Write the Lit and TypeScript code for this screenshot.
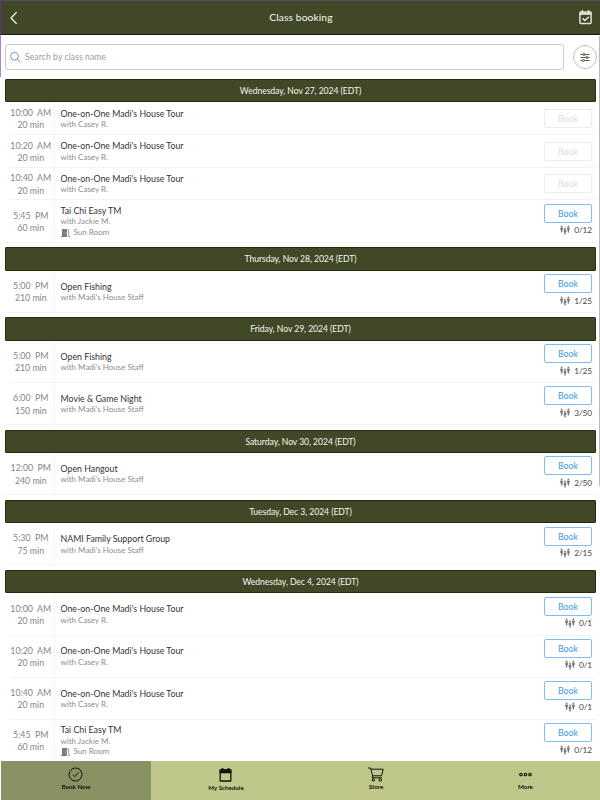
import { LitElement, html, css, svg } from "lit";
import { customElement, property } from "lit/decorators.js";
import { classMap } from "lit/directives/class-map.js";

interface Session {
  time: string;
  length: string;
  name: string;
  host: string;
  room?: string;
  count?: string;
}
interface Day {
  label: string;
  sessions: Session[];
}

const tour = (time: string, count?: string): Session => ({
  time, length: "20 min", name: "One-on-One Madi's House Tour", host: "with Casey R.", count,
});
const taiChi: Session = {
  time: "5:45  PM", length: "60 min", name: "Tai Chi Easy TM", host: "with Jackie M.", room: "Sun Room", count: "0/12",
};
const staff = (time: string, length: string, name: string, count: string): Session => ({
  time, length, name, host: "with Madi's House Staff", count,
});

const days: Day[] = [
  { label: "Wednesday, Nov 27, 2024 (EDT)", sessions: [tour("10:00  AM"), tour("10:20  AM"), tour("10:40  AM"), taiChi] },
  { label: "Thursday, Nov 28, 2024 (EDT)", sessions: [staff("5:00  PM", "210 min", "Open Fishing", "1/25")] },
  { label: "Friday, Nov 29, 2024 (EDT)", sessions: [staff("5:00  PM", "210 min", "Open Fishing", "1/25"), staff("6:00  PM", "150 min", "Movie & Game Night", "3/50")] },
  { label: "Saturday, Nov 30, 2024 (EDT)", sessions: [staff("12:00  PM", "240 min", "Open Hangout", "2/50")] },
  { label: "Tuesday, Dec 3, 2024 (EDT)", sessions: [staff("5:30  PM", "75 min", "NAMI Family Support Group", "2/15")] },
  { label: "Wednesday, Dec 4, 2024 (EDT)", sessions: [tour("10:00  AM", "0/1"), tour("10:20  AM", "0/1"), tour("10:40  AM", "0/1"), taiChi] },
];

const person = (x: number, y: number) => svg`<circle cx=${x} cy=${y} r="0.9"/><path d="M${x - 1.3} ${y + 1.3}h2.6v2.4h-.6v2.4h-1.4v-2.4h-.6z"/>`;

@customElement("session-row")
export class SessionRow extends LitElement {
  @property({ attribute: false }) session!: Session;

  static styles = css`
    :host { display: block; }
    .row { display: flex; box-sizing: border-box; height: 42.1px; }
    .row.short { height: 32.7px; }
    .when {
      box-sizing: border-box; width: 49.5px; padding: 1.2px 0 0 3px; border-right: 1px solid #f3f6f6;
      display: flex; flex-direction: column; justify-content: center; align-items: center;
      font-size: 8.8px; line-height: 12.4px; color: #858585; white-space: pre; letter-spacing: -0.02px;
    }
    .what { flex: 1; padding-left: 6px; display: flex; flex-direction: column; justify-content: center; }
    .name { font-size: 8.8px; line-height: 11.4px; color: #333; letter-spacing: 0; }
    .host, .room { font-size: 8px; line-height: 10.8px; color: #8d8d8d; }
    .room { display: flex; align-items: center; gap: 4px; }
    .act { width: 48px; padding-right: 5px; display: flex; flex-direction: column; align-items: flex-end; padding-top: 3.4px; }
    .short .act { padding-top: 6.6px; }
    .book {
      box-sizing: border-box; width: 48px; height: 19px; padding: 0; border: 1px solid #83bdf0; border-radius: 2px;
      background: #fff; color: #3c9be6; font: inherit; font-size: 8.8px; line-height: 17px;
    }
    .book:disabled { border-color: #ececec; color: #dedede; }
    .count { display: flex; align-items: center; gap: 4px; height: 15px; font-size: 8.3px; color: #444; letter-spacing: -0.1px; }
    svg { display: block; }
  `;

  render() {
    const s = this.session;
    return html`<div class=${classMap({ row: true, short: !s.count })}>
      <div class="when"><span>${s.time}</span><span>${s.length}</span></div>
      <div class="what">
        <div class="name">${s.name}</div>
        <div class="host">${s.host}</div>
        ${s.room ? html`<div class="room">
          <svg width="9" height="8" viewBox="0 0 9 8"><path d="M1 0h5v8H0V7h1z" fill="#7d7d7d"/><path d="M6.3.9h1.4v6.6H9" fill="none" stroke="#7d7d7d" stroke-width=".8"/><circle cx="4.9" cy="4.1" r=".5" fill="#fff"/></svg>
          <span>${s.room}</span></div>` : ""}
      </div>
      <div class="act">
        <button class="book" ?disabled=${!s.count}>Book</button>
        ${s.count ? html`<div class="count">
          <svg width="10" height="10" viewBox="0 0 10 10" fill="#777">${person(1.6, 1.3)}${person(5, 3.3)}${person(8.4, 1.3)}</svg>
          <span>${s.count}</span></div>` : ""}
      </div>
    </div>`;
  }
}

@customElement("app-root")
export class AppRoot extends LitElement {
  static styles = css`
    :host {
      display: flex; flex-direction: column; position: relative; width: 600px; height: 800px; overflow: hidden;
      background: #fff; font-family: Lato, "Noto Sans", sans-serif;
    }
    .top {
      flex: none; box-sizing: border-box; height: 35px; padding: 0 7px 0 9px; display: grid;
      grid-template-columns: 20px 1fr 14px; align-items: center; background: #414827; color: #f4f5ef;
      border-top: 1px solid #5b4964; border-bottom: 1px solid #151b05;
    }
    .title { text-align: center; font-size: 10.3px; letter-spacing: 0.08px; padding: 0 6px 2px 0; }
    .tools { flex: none; display: flex; gap: 9px; padding: 9px 3px 9px 5px; align-items: center; height: 26px; }
    .search {
      box-sizing: border-box; width: 559px; height: 26px; border: 1px solid #c8cdd1; border-radius: 3px;
      display: flex; align-items: center; gap: 4px; padding-left: 4px; font-size: 8.5px; letter-spacing: 0.13px; color: #919ca5;
    }
    .filter {
      box-sizing: border-box; width: 24px; height: 24px; border: 1px solid #bcc1c6; border-radius: 50%;
      display: flex; align-items: center; justify-content: center;
    }
    .list { flex: 1; min-height: 0; overflow: hidden; padding: 0 3px 0 5px; }
    .day { margin-bottom: 4.7px; }
    .date {
      box-sizing: border-box; height: 23.4px; margin-right: 1px; background: #414827; border: 1px solid #252c0c; border-radius: 1px;
      color: #f4f5ef; font-size: 8.6px; line-height: 22.6px; text-align: center; letter-spacing: -0.05px;
    }
    .line { height: 1px; margin: -1px 0 0 5px; background: #f1f4f4; }
    .line.last { margin-left: 0; }
    .tabs { flex: none; height: 39px; display: grid; grid-template-columns: 150px 150px 150px 1fr; margin-left: 1px; background: #bfc78a; }
    .tab { display: flex; flex-direction: column; align-items: center; color: #10130a; font-size: 6.2px; line-height: 8px; font-weight: 700; padding-top: 5px; }
    .tab.on { background: #889162; }
    .icon { height: 17px; display: flex; align-items: center; margin-left: -1px; }
    .label.low { padding-top: 1px; }
    .edge { position: absolute; left: 0; top: 0; width: 1px; height: 77px; background: linear-gradient(#64308f 35px, #a584d6 35px); }
    .thumb { position: absolute; right: 0; top: 36px; width: 1px; height: 450px; background: #b9b9b9; }
    svg { display: block; }
  `;

  render() {
    return html`
      <header class="top">
        <svg width="9" height="14" viewBox="0 0 9 14" fill="none" stroke="#f4f5ef" stroke-width="1.3"><path d="M7.6 1.2 2 7l5.6 5.8"/></svg>
        <div class="title">Class booking</div>
        <svg width="14" height="15" viewBox="0 0 14 15" fill="none" stroke="#dfe2d6" stroke-width="1.5"><rect x=".9" y="2" width="11.2" height="11.5" rx="1"/><path d="M.6 3.7h11.8" stroke-width="2.4"/><path d="M3.4 0v3M9.6 0v3M3.6 8.4l2.2 2.1L9.8 6.9"/></svg>
      </header>
      <div class="tools">
        <div class="search">
          <svg width="11" height="11" viewBox="0 0 11 11" fill="none" stroke="#84909a" stroke-width="1"><circle cx="4.5" cy="4.2" r="3.9"/><path d="m7.4 7.1 3.1 3.1"/></svg>
          <span>Search by class name</span>
        </div>
        <div class="filter">
          <svg width="10" height="9" viewBox="0 0 10 9" fill="#fff" stroke="#414827" stroke-width=".9"><path d="M.5 1.5h9M.5 4.5h9M.5 7.5h9"/><circle cx="4" cy="1.5" r="1"/><circle cx="7" cy="4.5" r="1"/><circle cx="3.4" cy="7.5" r="1"/></svg>
        </div>
      </div>
      <main class="list">
        ${days.map((d) => html`<section class="day">
          <div class="date">${d.label}</div>
          ${d.sessions.map((s, i) => html`<session-row .session=${s}></session-row>
            <div class=${classMap({ line: true, last: i === d.sessions.length - 1 })}></div>`)}
        </section>`)}
      </main>
      <nav class="tabs">
        <div class="tab on"><div class="icon"><svg width="15" height="15" viewBox="0 0 15 15" fill="none" stroke="#10130a"><circle cx="7.5" cy="7.5" r="6.5"/><path d="m4.8 7.7 1.9 1.9 3.7-4.1"/></svg></div><div class="label">Book Now</div></div>
        <div class="tab"><div class="icon"><svg width="13" height="14" viewBox="0 0 13 14"><path d="M1.2 2h10.6v11H1.2z" fill="none" stroke="#10130a" stroke-width="1.3" stroke-linejoin="round"/><path d="M.6 1.6h11.8v3.6H.6zM2.6 0h1.8v2H2.6zM8.6 0h1.8v2H8.6z" fill="#10130a"/></svg></div><div class="label low">My Schedule</div></div>
        <div class="tab"><div class="icon"><svg width="16" height="15" viewBox="0 0 16 15" fill="none" stroke="#10130a"><path d="M0 1h2.5l2.3 8.2M3 2.2h12.2l-1.7 6.6H4.7M4.8 8.8 4 10.8h10"/><circle cx="5.3" cy="13" r="1.2"/><circle cx="12.3" cy="13" r="1.2"/></svg></div><div class="label">Store</div></div>
        <div class="tab"><div class="icon"><svg width="13" height="5" viewBox="0 0 13 5" fill="none" stroke="#10130a" stroke-width="1.1"><circle cx="2" cy="2.5" r="1.3"/><circle cx="6.5" cy="2.5" r="1.3"/><circle cx="11" cy="2.5" r="1.3"/></svg></div><div class="label">More</div></div>
      </nav>
      <div class="edge"></div>
      <div class="thumb"></div>
    `;
  }
}
